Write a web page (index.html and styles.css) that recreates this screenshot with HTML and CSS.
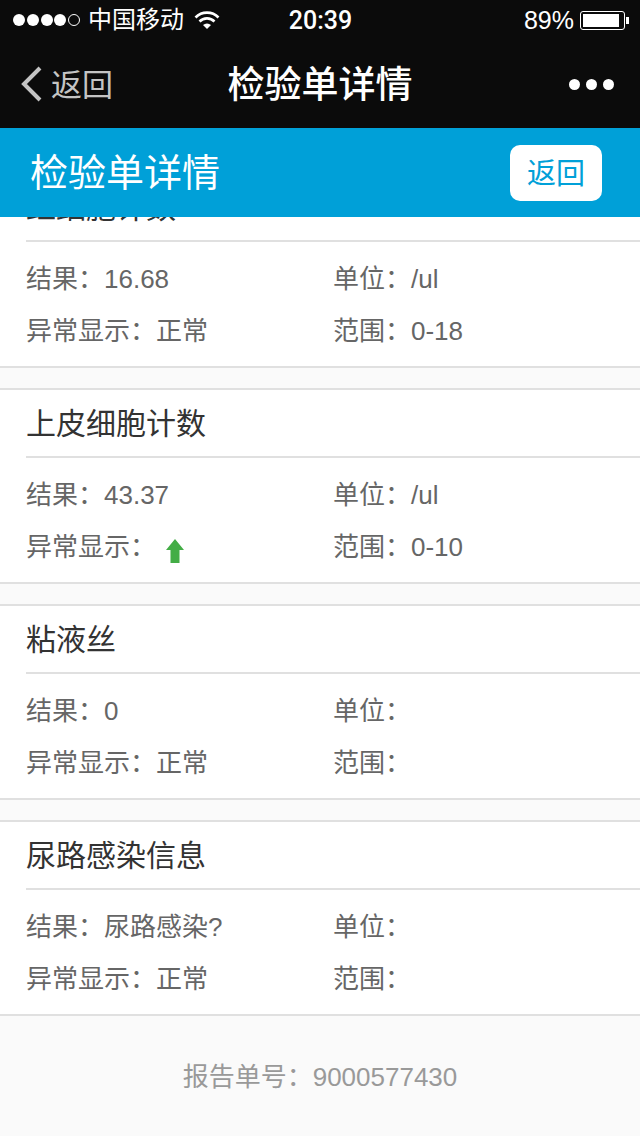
FILE: index.html
```html
<!DOCTYPE html>
<html lang="zh-CN">
<head>
    <meta charset="UTF-8">
    <meta name="viewport" content="width=device-width, initial-scale=1.0">
    <title>检验单详情</title>
    <link rel="stylesheet" href="styles.css">
</head>
<body>
    <div class="phone">
        <div class="status-bar">
            <div class="status-left">
                <span class="signal">
                    <i class="dot"></i><i class="dot"></i><i class="dot"></i><i class="dot"></i><i class="dot empty"></i>
                </span>
                <span class="carrier">中国移动</span>
                <svg class="wifi" width="26" height="20" viewBox="0 0 26 20">
                    <path d="M1.5 7.5 A16 16 0 0 1 24.5 7.5" fill="none" stroke="#fff" stroke-width="2.6"/>
                    <path d="M5.5 11.5 A10.5 10.5 0 0 1 20.5 11.5" fill="none" stroke="#fff" stroke-width="2.6"/>
                    <path d="M9 15 L13 19 L17 15 A6 6 0 0 0 9 15 Z" fill="#fff"/>
                </svg>
            </div>
            <div class="status-time">20:39</div>
            <div class="status-right">
                <span class="percent">89%</span>
                <span class="battery"><span class="battery-level"></span></span>
                <span class="battery-tip"></span>
            </div>
        </div>

        <div class="nav-bar">
            <div class="nav-back">
                <svg width="24" height="36" viewBox="0 0 24 36">
                    <path d="M20 2 L4 18 L20 34" fill="none" stroke="#c4c4c4" stroke-width="4"/>
                </svg>
                <span>返回</span>
            </div>
            <div class="nav-title">检验单详情</div>
            <div class="nav-more"><i></i><i></i><i></i></div>
        </div>

        <header class="page-header">
            <h1>检验单详情</h1>
            <button type="button" class="back-btn">返回</button>
        </header>

        <div class="content">
            <div class="list">
                <section class="card">
                    <h2>红细胞计数</h2>
                    <div class="rows">
                        <div>结果：16.68</div>
                        <div>单位：/ul</div>
                        <div>异常显示：正常</div>
                        <div>范围：0-18</div>
                    </div>
                </section>
                <section class="card">
                    <h2>上皮细胞计数</h2>
                    <div class="rows">
                        <div>结果：43.37</div>
                        <div>单位：/ul</div>
                        <div class="abnormal">异常显示：
                            <svg class="arrow" width="18" height="24" viewBox="0 0 18 24">
                                <path d="M9 0 L18 11 L13.5 11 L13.5 24 L4.5 24 L4.5 11 L0 11 Z" fill="#43ad46"/>
                            </svg>
                        </div>
                        <div>范围：0-10</div>
                    </div>
                </section>
                <section class="card">
                    <h2>粘液丝</h2>
                    <div class="rows">
                        <div>结果：0</div>
                        <div>单位：</div>
                        <div>异常显示：正常</div>
                        <div>范围：</div>
                    </div>
                </section>
                <section class="card">
                    <h2>尿路感染信息</h2>
                    <div class="rows">
                        <div>结果：尿路感染?</div>
                        <div>单位：</div>
                        <div>异常显示：正常</div>
                        <div>范围：</div>
                    </div>
                </section>
            </div>
            <div class="report-no">报告单号：9000577430</div>
        </div>
    </div>
</body>
</html>
```

FILE: styles.css
```css
* {
    box-sizing: border-box;
}
body {
    margin: 0;
    background-color: #fafafa;
    font-family: 'Liberation Sans', 'Noto Sans CJK SC', sans-serif;
    color: #333;
}
.phone {
    width: 640px;
    height: 1136px;
    overflow: hidden;
    display: flex;
    flex-direction: column;
}
.status-bar {
    height: 40px;
    flex: none;
    padding: 0 12px 0 13px;
    background-color: #0b0b0b;
    color: #fff;
    display: grid;
    grid-template-columns: 1fr auto 1fr;
    align-items: center;
    font-size: 25px;
}
.status-left {
    display: flex;
    align-items: center;
}
.signal {
    display: flex;
    gap: 1.75px;
}
.dot {
    width: 12px;
    height: 12px;
    border-radius: 50%;
    background-color: #fff;
}
.dot.empty {
    background: none;
    border: 1px solid #fff;
}
.carrier {
    margin-left: 8px;
    font-size: 24px;
    line-height: 40px;
    height: 40px;
}
.wifi {
    margin-left: 10px;
}
.status-time {
    font-family: 'Roboto', 'Liberation Sans', sans-serif;
    font-weight: 500;
    font-size: 25px;
}
.status-right {
    display: flex;
    align-items: center;
    justify-content: flex-end;
    margin-right: -1px;
}
.percent {
    margin-right: 6px;
}
.battery {
    width: 45px;
    height: 19px;
    padding: 2px;
    border: 1px solid #fff;
    border-radius: 3px;
}
.battery-level {
    display: block;
    width: 36px;
    height: 100%;
    background-color: #fff;
}
.battery-tip {
    width: 3px;
    height: 7px;
    margin-left: 1px;
    background-color: #fff;
}
.nav-bar {
    height: 88px;
    flex: none;
    padding: 0 20px;
    background-color: #0b0b0b;
    display: grid;
    grid-template-columns: 1fr auto 1fr;
    align-items: center;
}
.nav-back {
    display: flex;
    align-items: center;
    gap: 7px;
    font-size: 31px;
    color: #c4c4c4;
}
.nav-back span {
    margin-top: -4px;
}
.nav-title {
    color: #fff;
    font-size: 37px;
    font-weight: 500;
    margin-top: -4px;
}
.nav-more {
    display: flex;
    justify-content: flex-end;
    gap: 6px;
    margin-right: 6px;
}
.nav-more i {
    width: 11px;
    height: 11px;
    border-radius: 50%;
    background-color: #fff;
}
.page-header {
    height: 89px;
    flex: none;
    position: relative;
    z-index: 1;
    padding: 0 38px 0 30px;
    background-color: #00a0d8;
    display: flex;
    align-items: center;
    justify-content: space-between;
}
.page-header h1 {
    margin: -6px 0 0;
    color: #fff;
    font-size: 38px;
    font-weight: normal;
}
.back-btn {
    width: 92px;
    height: 56px;
    padding: 0 0 4px;
    border: none;
    border-radius: 10px;
    background-color: #fff;
    color: #00a0d8;
    font-family: inherit;
    font-size: 29px;
}
.content {
    flex: 1;
    min-height: 0;
    overflow: hidden;
}
.list {
    margin-top: -45px;
    display: flex;
    flex-direction: column;
    gap: 20px;
}
.card {
    height: 196px;
    background-color: #fff;
    border-top: 2px solid #e0e0e0;
    border-bottom: 2px solid #e0e0e0;
    padding: 0 0 0 26px;
}
.card h2 {
    margin: 0;
    height: 68px;
    line-height: 68px;
    font-size: 30px;
    font-weight: normal;
    color: #333;
    border-bottom: 2px solid #e0e0e0;
}
.rows {
    display: grid;
    grid-template-columns: 307px 1fr;
    grid-auto-rows: 52px;
    padding-top: 11px;
    font-size: 26px;
    line-height: 52px;
    color: #666;
}
.abnormal {
    display: flex;
    align-items: center;
}
.arrow {
    margin: 8px 0 0 10px;
}
.report-no {
    padding-top: 40px;
    text-align: center;
    font-size: 26px;
    color: #999;
}
```
